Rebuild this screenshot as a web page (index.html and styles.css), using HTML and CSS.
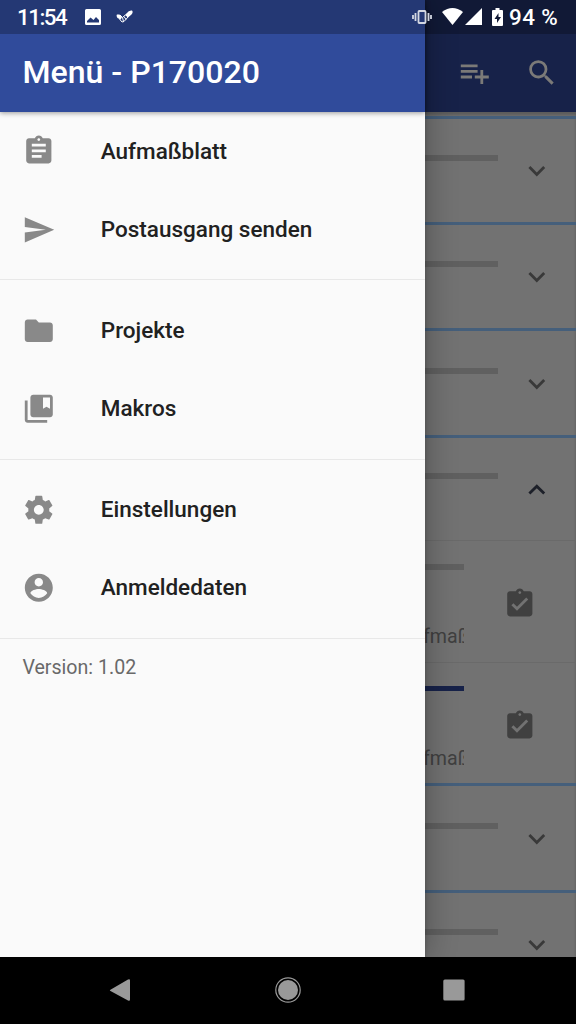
FILE: index.html
```html
<!DOCTYPE html>
<html lang="de">
<head>
<meta charset="utf-8">
<title>Menü</title>
<link rel="stylesheet" href="styles.css">
</head>
<body>
<div class="phone">
  <div class="app">
    <main class="page">
      <header class="page-bar">
        <svg class="icon" viewBox="0 0 24 24"><path d="M14 10H2v2h12v-2zm0-4H2v2h12V6zm4 8v-4h-2v4h-4v2h4v4h2v-4h4v-2h-4zM2 16h8v-2H2v2z"/></svg>
        <svg class="icon" viewBox="0 0 24 24"><path d="M15.5 14h-.79l-.28-.27A6.47 6.47 0 0 0 16 9.5 6.5 6.5 0 1 0 9.5 16c1.61 0 3.09-.59 4.23-1.57l.27.28v.79l5 4.99L20.49 19l-4.99-5zm-6 0C7.01 14 5 11.99 5 9.5S7.01 5 9.5 5 14 7.01 14 9.5 11.99 14 9.5 14z"/></svg>
      </header>
      <div class="cards">
        <div class="card"><span class="bar"></span><svg class="icon" viewBox="0 0 24 24"><path d="M16.59 8.59L12 13.17 7.41 8.59 6 10l6 6 6-6z"/></svg></div>
        <div class="card"><span class="bar"></span><svg class="icon" viewBox="0 0 24 24"><path d="M16.59 8.59L12 13.17 7.41 8.59 6 10l6 6 6-6z"/></svg></div>
        <div class="card"><span class="bar"></span><svg class="icon" viewBox="0 0 24 24"><path d="M16.59 8.59L12 13.17 7.41 8.59 6 10l6 6 6-6z"/></svg></div>
        <div class="card open"><span class="bar"></span><svg class="icon" viewBox="0 0 24 24"><path d="M12 8l-6 6 1.41 1.41L12 10.83l4.59 4.58L18 14z"/></svg></div>
        <div class="entry">
          <div class="entry-info"><span class="bar"></span><span class="entry-text">fmaß</span></div>
          <svg class="icon" viewBox="0 0 24 24"><path d="M19 3h-4.180C14.400 1.840 13.300 1 12 1s-2.400.84-2.820 2H5c-1.100 0-2 .9-2 2v14c0 1.100.9 2 2 2h14c1.100 0 2-.9 2-2V5c0-1.100-.9-2-2-2zm-7 0c.55 0 1 .45 1 1s-.45 1-1 1-1-.45-1-1 .45-1 1-1zm-2 14l-4-4 1.410-1.410L10 14.170l6.590-6.590L18 9l-8 8z"/></svg>
        </div>
        <div class="entry">
          <div class="entry-info"><span class="bar filled"></span><span class="entry-text">fmaß</span></div>
          <svg class="icon" viewBox="0 0 24 24"><path d="M19 3h-4.180C14.400 1.840 13.300 1 12 1s-2.400.84-2.820 2H5c-1.100 0-2 .9-2 2v14c0 1.100.9 2 2 2h14c1.100 0 2-.9 2-2V5c0-1.100-.9-2-2-2zm-7 0c.55 0 1 .45 1 1s-.45 1-1 1-1-.45-1-1 .45-1 1-1zm-2 14l-4-4 1.410-1.410L10 14.170l6.590-6.590L18 9l-8 8z"/></svg>
        </div>
        <div class="card"><span class="bar"></span><svg class="icon" viewBox="0 0 24 24"><path d="M16.59 8.59L12 13.17 7.41 8.59 6 10l6 6 6-6z"/></svg></div>
        <div class="card"><span class="bar"></span><svg class="icon" viewBox="0 0 24 24"><path d="M16.59 8.59L12 13.17 7.41 8.59 6 10l6 6 6-6z"/></svg></div>
      </div>
    </main>
    <aside class="drawer">
      <header class="drawer-bar"><span class="title">Menü - P170020</span></header>
      <nav class="menu">
        <div class="item"><svg class="icon" viewBox="0 0 24 24"><path d="M19 3h-4.180C14.400 1.840 13.300 1 12 1s-2.400.84-2.820 2H5c-1.100 0-2 .9-2 2v14c0 1.100.9 2 2 2h14c1.100 0 2-.9 2-2V5c0-1.100-.9-2-2-2zm-7 0c.55 0 1 .45 1 1s-.45 1-1 1-1-.45-1-1 .45-1 1-1zm2 14H7v-2h7v2zm3-4H7v-2h10v2zm0-4H7V7h10v2z"/></svg><span>Aufmaßblatt</span></div>
        <div class="item"><svg class="icon" viewBox="0 0 24 24"><path d="M2.010 21L23 12 2.010 3 2 10l15 2-15 2z"/></svg><span>Postausgang senden</span></div>
        <div class="divider"></div>
        <div class="item"><svg class="icon" viewBox="0 0 24 24"><path d="M10 4H4c-1.100 0-1.990.9-1.990 2L2 18c0 1.100.9 2 2 2h16c1.100 0 2-.9 2-2V8c0-1.100-.9-2-2-2h-8l-2-2z"/></svg><span>Projekte</span></div>
        <div class="item"><svg class="icon" viewBox="0 0 24 24"><path d="M4 6H2v14c0 1.100.9 2 2 2h14v-2H4V6z"/><path d="M20 2H8c-1.100 0-2 .9-2 2v12c0 1.100.9 2 2 2h12c1.100 0 2-.9 2-2V4c0-1.100-.9-2-2-2zm0 10l-2.500-1.500L15 12V4h5v8z"/></svg><span>Makros</span></div>
        <div class="divider"></div>
        <div class="item"><svg class="icon" viewBox="0 0 24 24"><path d="M19.430 12.980c.04-.32.07-.64.07-.98s-.03-.66-.07-.98l2.110-1.650c.19-.15.24-.42.12-.64l-2-3.460c-.12-.22-.39-.3-.61-.22l-2.490 1c-.52-.4-1.080-.73-1.690-.98l-.38-2.650C14.460 2.180 14.250 2 14 2h-4c-.25 0-.46.18-.49.42l-.38 2.650c-.61.25-1.170.59-1.690.98l-2.490-1c-.23-.09-.49 0-.61.22l-2 3.460c-.13.22-.07.49.12.64l2.110 1.650c-.04.32-.07.65-.07.98s.03.66.07.98l-2.110 1.650c-.19.15-.24.42-.12.64l2 3.460c.12.22.39.3.61.22l2.490-1c.52.4 1.080.73 1.690.98l.38 2.650c.03.24.24.42.49.42h4c.25 0 .46-.18.49-.42l.38-2.650c.61-.25 1.170-.59 1.690-.98l2.490 1c.23.09.49 0 .61-.22l2-3.460c.12-.22.07-.49-.12-.64l-2.110-1.650zM12 15.500c-1.930 0-3.500-1.570-3.500-3.500s1.570-3.500 3.500-3.500 3.500 1.570 3.500 3.500-1.570 3.500-3.500 3.500z"/></svg><span>Einstellungen</span></div>
        <div class="item"><svg class="icon" viewBox="0 0 24 24"><path d="M12 2C6.480 2 2 6.480 2 12s4.480 10 10 10 10-4.480 10-10S17.520 2 12 2zm0 3c1.660 0 3 1.340 3 3s-1.340 3-3 3-3-1.340-3-3 1.340-3 3-3zm0 14.200c-2.500 0-4.710-1.280-6-3.220.03-1.990 4-3.080 6-3.080 1.990 0 5.970 1.090 6 3.080-1.290 1.940-3.500 3.220-6 3.220z"/></svg><span>Anmeldedaten</span></div>
        <div class="divider"></div>
      </nav>
      <div class="version">Version: 1.02</div>
    </aside>
    <div class="status">
      <span class="clock">11:54</span>
      <svg class="s-image" viewBox="0 0 16 16"><path d="M1.500 0h13A1.500 1.500 0 0 1 16 1.500v13a1.500 1.500 0 0 1-1.500 1.500h-13A1.500 1.500 0 0 1 0 14.500v-13A1.500 1.500 0 0 1 1.500 0zM2 13.500h12V11l-3-3-2.500 3L5.500 8.500 2 12z"/></svg>
      <svg class="s-check" viewBox="0 0 17 13"><path d="M10.500 3.500Q13 0 16 .6Q17.500 2 15.500 4.500L12 7.500 9.500 5.500zM1 4.500Q0 6 1.500 8L4.500 9.500 6 7.500 3.500 4.500z"/><path class="line" d="M4 5l2.500 2.500 4-3.500 1.500 3-4 4.500-2 .5-2.500-3M6.500 7.500l1 4M8 6.500l2 3"/></svg>
      <span class="grow"></span>
      <svg class="s-vibrate" viewBox="0 0 20 16"><path class="line" d="M1 6v4M3.500 4v8M16.500 4v8M19 6v4"/><rect class="frame" x="6.500" y="2" width="7" height="12" rx=".7"/></svg>
      <svg class="s-wifi" viewBox="0 0 21 17"><path d="M0 4Q10.500-4 21 4L10.500 17z"/></svg>
      <svg class="s-cell" viewBox="0 0 17 17"><path d="M17 0v17H0z"/></svg>
      <svg class="s-battery" viewBox="0 0 11 18"><path d="M3.500 0h4v2H10q1 0 1 1v14q0 1-1 1H1q-1 0-1-1V3q0-1 1-1h2.500zM6.500 5L2.500 11H5v4l4-6H6.500z"/></svg>
      <span class="percent">94 %</span>
    </div>
  </div>
  <div class="navbar">
    <svg class="nav-icon back" viewBox="0 0 28 28"><path d="M4 14L22 3.500Q24 2.500 24 4.500v19q0 2-2 1L4.500 15Q3.500 14.500 4 14z"/></svg>
    <svg class="nav-icon" viewBox="0 0 28 28"><circle class="ring" cx="14" cy="14" r="12.200"/><circle cx="14" cy="14" r="10"/></svg>
    <svg class="nav-icon" viewBox="0 0 28 28"><rect x="3.300" y="3.500" width="21.300" height="21" rx="1.500"/></svg>
  </div>
</div>
</body>
</html>
```
FILE: styles.css
```css
* { box-sizing: border-box; }

body {
  margin: 0;
  background: #000;
  font-family: Roboto, "Liberation Sans", sans-serif;
}

.phone {
  width: 576px;
  height: 1024px;
  display: flex;
  flex-direction: column;
  overflow: hidden;
}

.app {
  position: relative;
  height: 957px;
  flex: none;
  overflow: hidden;
}

.icon {
  width: 33.6px;
  height: 33.6px;
  flex: none;
}

/* Dimmed page under the drawer */
.page {
  height: 100%;
  background: #727272;
}

.page-bar {
  height: 112px;
  padding: 33.6px 17px 0 0;
  display: flex;
  align-items: center;
  justify-content: flex-end;
  gap: 33.6px;
  background: #172249;
  fill: #7b7a78;
}

.cards {
  padding-top: 3.7px;
  box-shadow: inset 0 3px 3px rgba(0, 0, 0, .2);
}

.card {
  height: 106.4px;
  border-top: 3px solid #455f7b;
  padding: 0 22.4px 0 0;
  display: flex;
  align-items: center;
  justify-content: space-between;
  fill: #393939;
}

.card .bar {
  width: 497.7px;
  margin-bottom: 25px;
}

.card .icon { margin-top: 1px; }

.card.open {
  height: 105px;
  fill: #1d2029;
}

.bar {
  flex: none;
  height: 5.8px;
  background: #606060;
}

.bar.filled { background: #172249; }

.entry {
  height: 121.8px;
  border-top: 1px solid #6a6a6a;
  padding-right: 39.4px;
  display: flex;
  align-items: center;
  justify-content: space-between;
  fill: #404040;
}

.entry-info {
  width: 464px;
  height: 100%;
  padding-top: 23px;
  display: flex;
  flex-direction: column;
  gap: 54.5px;
}

.entry-text {
  padding-left: 423px;
  overflow: hidden;
  white-space: nowrap;
  font-size: 19.6px;
  line-height: 26px;
  color: #404040;
}

.entry .icon { margin-top: 5px; }

/* Navigation drawer */
.drawer {
  position: absolute;
  top: 0;
  left: 0;
  width: 425.4px;
  height: 100%;
  background: #fafafa;
  box-shadow: 0 0 30px rgba(0, 0, 0, .32), 0 0 4px rgba(0, 0, 0, .2);
}

.drawer-bar {
  height: 112px;
  padding: 31.6px 0 0 22.4px;
  display: flex;
  align-items: center;
  background: #304b9b;
  box-shadow: 0 1px 5px rgba(0, 0, 0, .4);
}

.title {
  font-size: 32.1px;
  font-weight: 500;
  color: #fff;
  white-space: nowrap;
}

.item {
  height: 78.4px;
  padding-left: 22.4px;
  display: flex;
  align-items: center;
  gap: 44.8px;
  font-size: 22.5px;
  font-weight: 500;
  color: #212121;
  fill: #898989;
}

.item span { margin-top: -1px; }

.divider {
  height: 22.4px;
  display: flex;
  align-items: center;
}

.divider::before {
  content: "";
  width: 100%;
  height: 1px;
  background: #e8e8e8;
}

.version {
  padding: 5px 0 0 22.4px;
  font-size: 19.6px;
  line-height: 25px;
  color: #696969;
}

/* System status bar, drawn over page and drawer */
.status {
  position: absolute;
  top: 0;
  left: 0;
  width: 100%;
  height: 33.6px;
  padding: 0 17px 0 17px;
  display: flex;
  align-items: center;
  background: rgba(0, 0, 0, .25);
  color: #fff;
  fill: #fff;
}

.clock, .percent {
  font-size: 22.4px;
  font-weight: 500;
  white-space: nowrap;
}

.clock { width: 50px; letter-spacing: -1.5px; }
.percent { width: 50px; letter-spacing: .4px; }

.grow { flex: 1; }
.line, .frame { fill: none; stroke: #fff; }
.s-image { width: 16px; height: 16px; margin-left: 18px; }
.s-check { width: 17px; height: 13px; margin-left: 15px; }
.s-vibrate { width: 20px; height: 16px; margin-right: 10px; }
.s-vibrate .line, .s-vibrate .frame { stroke: #d3d7e2; stroke-width: 1.8; }
.s-wifi { width: 21px; height: 17px; margin-right: 2px; }
.s-cell { width: 17px; height: 17px; margin-right: 10px; }
.s-battery { width: 11px; height: 18px; margin-right: 6px; }

.navbar {
  flex: 1;
  padding: 0 108px 1px 106px;
  display: flex;
  align-items: center;
  justify-content: space-between;
  background: #000;
  fill: #999;
}

.nav-icon { width: 28px; height: 28px; }
.nav-icon.back { margin-right: 2px; }
.ring { fill: none; stroke: #999; stroke-width: 1.2; }
```
